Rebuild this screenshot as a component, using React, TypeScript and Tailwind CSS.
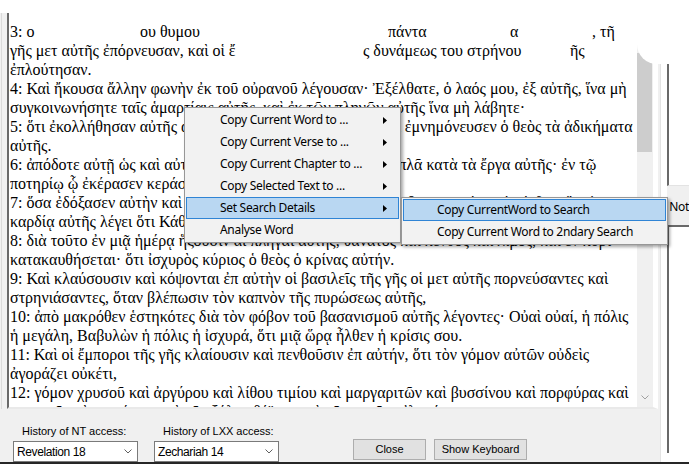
import React from "react";

const lines: string[] = [
  "ἐπλούτησαν.",
  "4: Καὶ ἤκουσα ἄλλην φωνὴν ἐκ τοῦ οὐρανοῦ λέγουσαν· Ἐξέλθατε, ὁ λαός μου, ἐξ αὐτῆς, ἵνα μὴ",
  "συγκοινωνήσητε ταῖς ἁμαρτίαις αὐτῆς, καὶ ἐκ τῶν πληγῶν αὐτῆς ἵνα μὴ λάβητε·",
  "5: ὅτι ἐκολλήθησαν αὐτῆς αἱ ἁμαρτίαι ἄχρι τοῦ οὐρανοῦ, καὶ ἐμνημόνευσεν ὁ θεὸς τὰ ἀδικήματα",
  "αὐτῆς.",
  "6: ἀπόδοτε αὐτῇ ὡς καὶ αὐτὴ ἀπέδωκεν, καὶ διπλώσατε τὰ διπλᾶ κατὰ τὰ ἔργα αὐτῆς· ἐν τῷ",
  "ποτηρίῳ ᾧ ἐκέρασεν κεράσατε αὐτῇ διπλοῦν·",
  "7: ὅσα ἐδόξασεν αὐτὴν καὶ ἐστρηνίασεν, τοσοῦτον δότε αὐτῇ βασανισμὸν καὶ πένθος. ὅτι ἐν τῇ",
  "καρδίᾳ αὐτῆς λέγει ὅτι Κάθημαι βασίλισσα καὶ χήρα οὐκ εἰμί, καὶ πένθος οὐ μὴ ἴδω·",
  "8: διὰ τοῦτο ἐν μιᾷ ἡμέρᾳ ἥξουσιν αἱ πληγαὶ αὐτῆς, θάνατος καὶ πένθος καὶ λιμός, καὶ ἐν πυρὶ",
  "κατακαυθήσεται· ὅτι ἰσχυρὸς κύριος ὁ θεὸς ὁ κρίνας αὐτήν.",
  "9: Καὶ κλαύσουσιν καὶ κόψονται ἐπ αὐτὴν οἱ βασιλεῖς τῆς γῆς οἱ μετ αὐτῆς πορνεύσαντες καὶ",
  "στρηνιάσαντες, ὅταν βλέπωσιν τὸν καπνὸν τῆς πυρώσεως αὐτῆς,",
  "10: ἀπὸ μακρόθεν ἑστηκότες διὰ τὸν φόβον τοῦ βασανισμοῦ αὐτῆς λέγοντες· Οὐαὶ οὐαί, ἡ πόλις",
  "ἡ μεγάλη, Βαβυλὼν ἡ πόλις ἡ ἰσχυρά, ὅτι μιᾷ ὥρᾳ ἦλθεν ἡ κρίσις σου.",
  "11: Καὶ οἱ ἔμποροι τῆς γῆς κλαίουσιν καὶ πενθοῦσιν ἐπ αὐτήν, ὅτι τὸν γόμον αὐτῶν οὐδεὶς",
  "ἀγοράζει οὐκέτι,",
  "12: γόμον χρυσοῦ καὶ ἀργύρου καὶ λίθου τιμίου καὶ μαργαριτῶν καὶ βυσσίνου καὶ πορφύρας καὶ",
  "σηρικοῦ καὶ κοκκίνου, καὶ πᾶν ξύλον θύϊνον καὶ πᾶν σκεῦος ἐλεφάντινον",
];

const menuItems = [
  { label: "Copy Current Word to ...", sub: true },
  { label: "Copy Current Verse to ...", sub: true },
  { label: "Copy Current Chapter to ...", sub: true },
  { label: "Copy Selected Text to ...", sub: true },
  { label: "Set Search Details", sub: true, active: true },
  { label: "Analyse Word", sub: false },
];

const subItems = [
  { label: "Copy CurrentWord to Search", active: true },
  { label: "Copy Current Word to 2ndary Search" },
];

const Arrow = () => (
  <svg width="4" height="7" viewBox="0 0 4 7" className="mr-[11px] shrink-0">
    <path d="M0 0 L4 3.5 L0 7 Z" fill="#000" />
  </svg>
);

const Chevron = ({ color = "#555" }: { color?: string }) => (
  <svg width="8" height="5" viewBox="0 0 8 5">
    <polyline points="0.5,0.5 4,4 7.5,0.5" fill="none" stroke={color} strokeWidth="1" />
  </svg>
);

const Combo = ({ value }: { value: string }) => (
  <div className="flex h-[21px] w-[125px] items-center justify-between border border-[#7a7a7a] bg-white pl-[3px] pr-[5px] text-[12px] leading-none tracking-[-0.4px] text-black">
    <span>{value}</span>
    <Chevron color="#606060" />
  </div>
);

const Button = ({ label, w }: { label: string; w: string }) => (
  <div className={`flex h-[21px] ${w} items-center justify-center border border-[#adadad] bg-[#e1e1e1] text-[11px] text-black`}>
    {label}
  </div>
);

export default function App() {
  return (
    <div className="relative flex h-[464px] w-[689px] flex-col overflow-hidden bg-[#f0f0f0] font-['Liberation_Sans',Arial,sans-serif]">
      <div className="flex h-[462px]">
        {/* left side: text + bottom controls */}
        <div className="flex w-[666px] flex-col">
          <div className="flex h-[409px]">
            <div className="ml-[1px] w-[1px] bg-[#dadada]" />
            <div className="ml-[5px] flex w-[651px] border-b-2 border-l-2 border-r-[5px] border-b-[#e9e9e9] border-l-[#696969] border-r-white bg-white">
              <div className="flex-1 overflow-hidden pl-[1px] pt-[22px] font-['Liberation_Serif',serif] text-[16px] leading-[19px] text-black">
                <div className="flex whitespace-nowrap">
                  <span className="inline-block w-[130px]">3: ο</span>
                  <span className="inline-block w-[248px]">ου θυμου</span>
                  <span className="inline-block w-[122px]">πάντα</span>
                  <span className="inline-block w-[82px]">α</span>
                  <span>, τῆ</span>
                </div>
                <div className="flex whitespace-nowrap">
                  <span className="inline-block w-[353px]">γῆς μετ αὐτῆς ἐπόρνευσαν, καὶ οἱ ἔ</span>
                  <span className="inline-block w-[207px]">ς δυνάμεως του στρήνου</span>
                  <span>ῆς</span>
                </div>
                {lines.map((l, i) => (
                  <div key={i} className="whitespace-nowrap">
                    {l}
                  </div>
                ))}
              </div>
              {/* vertical scrollbar */}
              <div className="flex w-[16px] flex-col bg-[#f0f0f0]">
                <div className="h-[53px]" />
                <div className="h-[99px] w-[15px] bg-[#cdcdcd]" />
                <div className="flex-1" />
                <div className="flex h-[17px] items-center justify-center pb-[2px]">
                  <Chevron color="#a0a0a0" />
                </div>
              </div>
            </div>
          </div>
          {/* bottom controls */}
          <div className="flex pl-[13px]">
            <div className="flex flex-col">
              <div className="ml-[9px] mt-[16px] h-[16px] text-[11px] leading-[13px] text-black">History of NT access:</div>
              <Combo value="Revelation 18" />
            </div>
            <div className="ml-[16px] flex flex-col">
              <div className="ml-[9px] mt-[16px] h-[16px] text-[11px] leading-[13px] text-black">History of LXX access:</div>
              <Combo value="Zechariah 14" />
            </div>
            <div className="ml-[74px] mt-[30px] flex gap-[8px]">
              <Button label="Close" w="w-[73px]" />
              <Button label="Show Keyboard" w="w-[93px]" />
            </div>
          </div>
        </div>
        {/* right side panel */}
        <div className="flex flex-1 border-l border-[#e3e3e3]">
          <div className="w-[6px] bg-white" />
          <div className="flex flex-1 flex-col">
            <div className="h-[186px] border-b border-l-2 border-b-[#e3e3e3] border-l-[#696969] bg-white" />
            <div className="h-[39px] bg-[#f0f0f0] pl-[2px] pt-[14px] font-['Noto_Sans',sans-serif] text-[12px] leading-[14px] tracking-[-0.3px] text-black">
              Not
            </div>
            <div className="h-[228px] border-l-2 border-t-2 border-[#696969] bg-white" />
            <div className="flex-1 bg-white" />
          </div>
        </div>
      </div>
      <div className="h-[2px] bg-[#262626]" />

      {/* fade remnants at top */}
      <div className="absolute left-0 top-0 h-[13px] w-full bg-white" />
      <div className="absolute right-0 top-0 h-[64px] w-[52px] rounded-bl-[20px] bg-white" />

      {/* context menu */}
      <div className="absolute left-[184px] top-[107px] w-[217px] border border-[#979797] bg-[#f2f2f2] p-[1px] font-['Noto_Sans',sans-serif] text-[12px] tracking-[-0.3px] text-black shadow-[2px_2px_3px_rgba(0,0,0,0.35)]">
        {menuItems.map((m) => (
          <div
            key={m.label}
            className={`flex h-[22px] items-center justify-between border pl-[33px] ${
              m.active ? "border-[#2f84d5] bg-[#b9d7f2]" : "border-transparent"
            }`}
          >
            <span className="whitespace-nowrap">{m.label}</span>
            {m.sub && <Arrow />}
          </div>
        ))}
      </div>

      {/* submenu */}
      <div className="absolute left-[401px] top-[197px] w-[267px] border border-[#979797] bg-[#f2f2f2] p-[1px] font-['Noto_Sans',sans-serif] text-[12px] tracking-[-0.3px] text-black shadow-[2px_2px_3px_rgba(0,0,0,0.35)]">
        {subItems.map((m) => (
          <div
            key={m.label}
            className={`flex h-[22px] items-center whitespace-nowrap border pl-[33px] ${
              m.active ? "border-[#2f84d5] bg-[#b9d7f2]" : "border-transparent"
            }`}
          >
            {m.label}
          </div>
        ))}
      </div>
    </div>
  );
}
